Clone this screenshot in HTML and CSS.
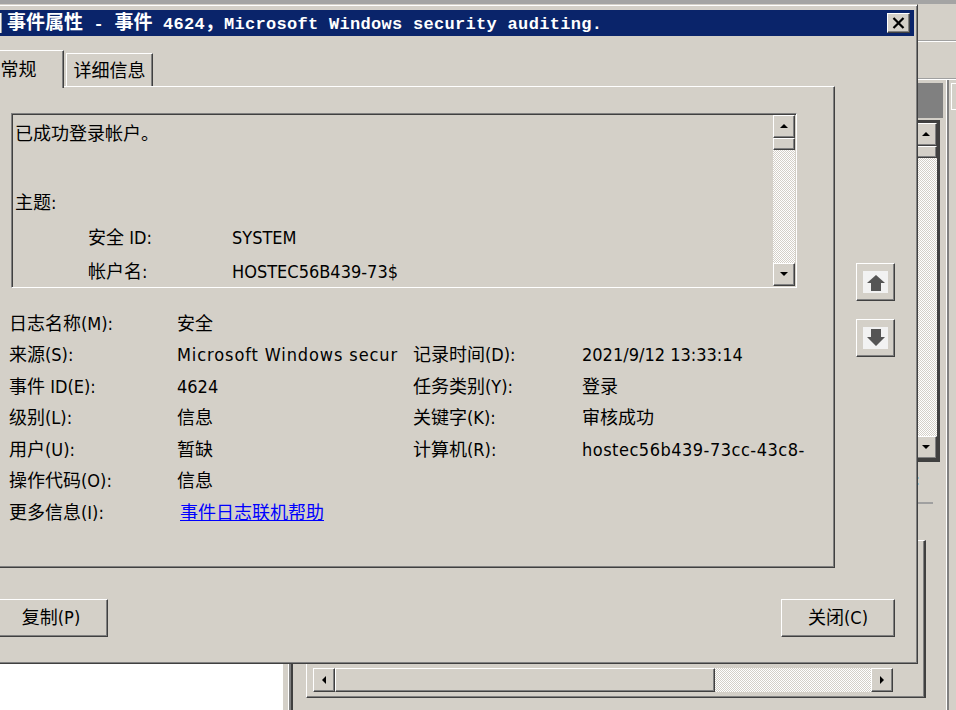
FILE: index.html
```html
<!DOCTYPE html>
<html lang="zh-CN">
<head>
<meta charset="utf-8">
<title>事件属性</title>
<link rel="stylesheet" href="styles.css">
</head>
<body>
<div class="backwin">
  <div class="bw-title"></div>
  <div class="bw-menu"></div>
  <div class="bw-tool"></div>
  <div class="bw-main">
    <div class="bw-tree"></div>
    <div class="bw-split"></div>
    <div class="bw-center">
      <div class="bw-head"></div>
      <div class="bw-list">
        <div class="vscroll bw-vs">
          <div class="sbtn"><svg width="8" height="5" viewBox="0 0 8 5"><polygon points="4,0 8,4 0,4" fill="#000"/></svg></div>
          <div class="sthumb"></div>
          <div class="strack"></div>
          <div class="sbtn"><svg width="8" height="5" viewBox="0 0 8 5"><polygon points="0,0 8,0 4,4" fill="#000"/></svg></div>
        </div>
      </div>
      <div class="bw-info">
        <span class="bw-colon">:</span>
        <div class="bw-rule"></div>
      </div>
      <div class="bw-preview">
        <div class="hscroll">
          <div class="sbtn hbtn"><svg width="5" height="9" viewBox="0 0 5 9"><polygon points="4,0 4,8 0,4" fill="#000"/></svg></div>
          <div class="hthumb"></div>
          <div class="strack"></div>
          <div class="sbtn hbtn"><svg width="5" height="9" viewBox="0 0 5 9"><polygon points="0,0 4,4 0,8" fill="#000"/></svg></div>
        </div>
      </div>
    </div>
    <div class="bw-actions">
      <div class="bw-act-head"></div>
    </div>
  </div>
</div>

<div class="dialog">
  <div class="titlebar">
    <span class="ticon"></span>
    <span class="ttext"><span class="cjk">事件属性</span> - <span class="cjk">事件</span> 4624<span class="cjk">，</span>Microsoft Windows security auditing.</span>
    <span class="closebtn raised"><svg width="13" height="12" viewBox="0 0 13 12"><path d="M1.5 1 L11.5 11 M11.5 1 L1.5 11" stroke="#000" stroke-width="2.2" fill="none"/></svg></span>
  </div>
  <div class="dlg-body">
    <div class="dlg-main">
      <div class="tabcol">
        <div class="tabs">
          <div class="tab sel">常规</div>
          <div class="tab">详细信息</div>
        </div>
        <div class="panel">
          <div class="msgbox">
            <div class="msgtext">
              <div class="mline">已成功登录帐户。</div>
              <div class="mline"></div>
              <div class="mline">主题:</div>
              <div class="mline sub"><span class="mk">安全 ID:</span><span>SYSTEM</span></div>
              <div class="mline sub"><span class="mk">帐户名:</span><span>HOSTEC56B439-73$</span></div>
            </div>
            <div class="vscroll">
              <div class="sbtn"><svg width="8" height="5" viewBox="0 0 8 5"><polygon points="4,0 8,4 0,4" fill="#000"/></svg></div>
              <div class="sthumb"></div>
              <div class="strack"></div>
              <div class="sbtn"><svg width="8" height="5" viewBox="0 0 8 5"><polygon points="0,0 8,0 4,4" fill="#000"/></svg></div>
            </div>
          </div>
          <div class="fields">
            <div class="lbl">日志名称(M):</div><div class="val">安全</div><div class="lbl"></div><div class="val"></div>
            <div class="lbl">来源(S):</div><div class="val wide">Microsoft Windows secur</div><div class="lbl">记录时间(D):</div><div class="val">2021/9/12 13:33:14</div>
            <div class="lbl">事件 ID(E):</div><div class="val">4624</div><div class="lbl">任务类别(Y):</div><div class="val">登录</div>
            <div class="lbl">级别(L):</div><div class="val">信息</div><div class="lbl">关键字(K):</div><div class="val">审核成功</div>
            <div class="lbl">用户(U):</div><div class="val">暂缺</div><div class="lbl">计算机(R):</div><div class="val host">hostec56b439-73cc-43c8-</div>
            <div class="lbl">操作代码(O):</div><div class="val">信息</div><div class="lbl"></div><div class="val"></div>
            <div class="lbl">更多信息(I):</div><div class="val"><a class="link" href="#">事件日志联机帮助</a></div><div class="lbl"></div><div class="val"></div>
          </div>
        </div>
      </div>
      <div class="navcol">
        <div class="navbtn raised"><svg width="25" height="22" viewBox="0 0 25 22"><rect width="25" height="22" fill="#f2f2f2"/><path d="M13 4 L22 12 L18 12 L18 20 L8 20 L8 12 L4 12 Z" fill="#555"/></svg></div>
        <div class="navbtn raised"><svg width="25" height="22" viewBox="0 0 25 22"><rect width="25" height="22" fill="#f2f2f2"/><path d="M8 2 L18 2 L18 10 L22 10 L13 19 L4 10 L8 10 Z" fill="#555"/></svg></div>
      </div>
    </div>
    <div class="dlg-buttons">
      <div class="btn raised">复制(P)</div>
      <div class="btn raised">关闭(C)</div>
    </div>
  </div>
</div>
</body>
</html>
```

FILE: styles.css
```css
* { box-sizing: border-box; }
html, body { margin: 0; padding: 0; }
body {
  width: 956px;
  height: 710px;
  overflow: hidden;
  position: relative;
  background: #d4d0c8;
  font-family: "DejaVu Sans Condensed", "DejaVu Sans", "Noto Sans CJK SC", sans-serif;
  font-size: 18px;
  color: #000;
}

.raised {
  background: #d4d0c8;
  border: 1px solid;
  border-color: #fff #404040 #404040 #fff;
  box-shadow: inset -1px -1px #808080;
}

/* ---------- background window ---------- */
.backwin {
  position: absolute;
  left: 0;
  top: 0;
  width: 980px;
  height: 720px;
  display: flex;
  flex-direction: column;
}
.bw-title { height: 4px; background: #a4a4a4; flex: none; }
.bw-menu, .bw-tool {
  height: 38px;
  flex: none;
  border-bottom: 1px solid #fff;
  box-shadow: inset 0 -1px #a0a0a0;
}
.bw-main {
  flex: 1;
  display: grid;
  grid-template-columns: 283px 6px 657px 1fr;
}
.bw-tree { background: #fff; }
.bw-split { background: #d4d0c8; box-shadow: inset -1px 0 #fff; }
.bw-center {
  border-left: 2px solid #808080;
  box-shadow: inset 2px 0 #404040;
  display: flex;
  flex-direction: column;
  padding-top: 3px;
}
.bw-head { height: 35px; background: #808080; margin-right: 3px; }
.bw-list {
  margin-top: 2px;
  height: 342px;
  margin-right: 6px;
  border: 3px solid #404040;
  border-left: none;
  display: flex;
  justify-content: flex-end;
  background: #fff;
}
.bw-info {
  height: 78px;
  padding: 10px 0 0 624px;
  font-size: 15px;
}
.bw-colon { display: block; line-height: 16px; }
.bw-rule { width: 18px; height: 2px; background: #a0a0a0; margin: 14px 0 0 0; }
.bw-preview {
  height: 158px;
  margin: 0 20px 0 15px;
  border: 1px solid;
  border-color: #fff #404040 #404040 #fff;
  border-right-width: 2px;
  box-shadow: inset -1px -1px #808080;
  display: flex;
  flex-direction: column;
  justify-content: flex-end;
  padding: 0 0 5px 6px;
}
.bw-actions {
  border-left: 1px solid #fff;
  box-shadow: inset 2px 0 #808080;
  padding: 3px 0 0 4px;
}
.bw-act-head { height: 27px; border-top: 1px solid #fff; border-left: 1px solid #fff; border-bottom: 1px solid #fff; }

/* ---------- scrollbars ---------- */
.vscroll {
  width: 22px;
  flex: none;
  display: flex;
  flex-direction: column;
}
.sbtn {
  height: 23px;
  flex: none;
  background: #d4d0c8;
  border: 1px solid;
  border-color: #fff #404040 #404040 #fff;
  box-shadow: inset -1px -1px #808080;
  display: flex;
  align-items: center;
  justify-content: center;
}
.sthumb {
  height: 12px;
  flex: none;
  background: #d4d0c8;
  border: 1px solid;
  border-color: #fff #404040 #404040 #fff;
  box-shadow: inset -1px -1px #808080;
}
.strack {
  flex: 1;
  background: repeating-conic-gradient(#d4d0c8 0 25%, #fff 0 50%) 0 0 / 2px 2px;
}
.hscroll {
  width: 580px;
  height: 24px;
  display: flex;
}
.hbtn { width: 22px; height: 24px; }
.hthumb {
  width: 380px;
  flex: none;
  background: #d4d0c8;
  border: 1px solid;
  border-color: #fff #404040 #404040 #fff;
  box-shadow: inset -1px -1px #808080;
}

/* ---------- dialog ---------- */
.dialog {
  position: absolute;
  left: -30px;
  top: 4px;
  width: 948px;
  height: 660px;
  background: #d4d0c8;
  border: 1px solid;
  border-color: #d4d0c8 #404040 #404040 #d4d0c8;
  box-shadow: inset 1px 1px #fff, inset -1px -1px #808080;
  padding: 5px 3px 3px 3px;
  display: flex;
  flex-direction: column;
}
.titlebar {
  height: 26px;
  flex: none;
  background: #0a246a;
  color: #fff;
  display: flex;
  align-items: center;
  padding-left: 8px;
}
.ticon {
  width: 20px;
  height: 20px;
  flex: none;
  background: #f4f4f4;
  border-right: 1px solid #9a9a9a;
}
.ttext {
  margin-left: 5px;
  font-family: "Liberation Mono", "Noto Sans CJK SC", monospace;
  font-weight: 700;
  font-size: 17px;
  letter-spacing: 0.3px;
  line-height: 26px;
  white-space: pre;
}
.ttext .cjk {
  font-family: "Noto Sans CJK SC", sans-serif;
  font-size: 19px;
  font-weight: 700;
  letter-spacing: 0;
}
.closebtn {
  margin-left: auto;
  margin-right: 4px;
  width: 23px;
  height: 20px;
  flex: none;
  display: flex;
  align-items: center;
  justify-content: center;
}

.dlg-body {
  flex: 1;
  padding: 14px 19px 0 4px;
  display: flex;
  flex-direction: column;
}
.dlg-main { display: flex; }
.tabcol { width: 857px; flex: none; display: flex; flex-direction: column; }
.tabs {
  height: 36px;
  display: flex;
  align-items: flex-end;
  position: relative;
  z-index: 1;
}
.tab {
  height: 33px;
  width: 87px;
  margin-left: 2px;
  background: #d4d0c8;
  border-top: 1px solid #fff;
  border-left: 1px solid #fff;
  border-right: 1px solid #404040;
  box-shadow: inset -1px 0 #808080;
  display: flex;
  align-items: center;
  justify-content: center;
  padding-top: 2px;
  line-height: 22px;
}
.tab.sel {
  height: 38px;
  width: 88px;
  margin-left: -2px;
  margin-bottom: -2px;
  padding: 0 3px 0 0;
}
.panel {
  height: 482px;
  border: 1px solid;
  border-color: #fff #404040 #404040 #fff;
  box-shadow: inset -1px -1px #808080;
  padding: 26px 0 0 32px;
}
.msgbox {
  width: 786px;
  height: 175px;
  border: 1px solid;
  border-color: #808080 #fff #fff #808080;
  box-shadow: inset 1px 1px #404040, inset -1px -1px #d4d0c8;
  padding: 1px;
  display: flex;
}
.msgtext {
  flex: 1;
  padding: 2px 0 0 2px;
  overflow: hidden;
}
.mline {
  height: 34.5px;
  line-height: 34.5px;
  white-space: nowrap;
}
.mline.sub { padding-left: 73px; display: flex; }
.mk { width: 144px; flex: none; }

.fields {
  margin: 20px 0 0 -2px;
  display: grid;
  grid-template-columns: 168px 236px 169px 230px;
  grid-auto-rows: 31.5px;
  align-items: center;
  line-height: 22px;
}
.lbl, .val { white-space: nowrap; overflow: hidden; }
.val.wide { letter-spacing: 0.9px; }
.val.host { letter-spacing: 0.5px; }
.link {
  color: #0000ff;
  text-decoration: underline;
  margin-left: 3px;
}

.navcol {
  margin-left: 21px;
  padding-top: 213px;
  display: flex;
  flex-direction: column;
  gap: 18px;
}
.navbtn {
  width: 39px;
  height: 38px;
  display: flex;
  align-items: center;
  justify-content: center;
}

.dlg-buttons {
  display: flex;
  justify-content: space-between;
  margin-top: 31px;
  padding-left: 16px;
}
.btn {
  width: 114px;
  height: 38px;
  display: flex;
  align-items: center;
  justify-content: center;
  line-height: 22px;
}
```
